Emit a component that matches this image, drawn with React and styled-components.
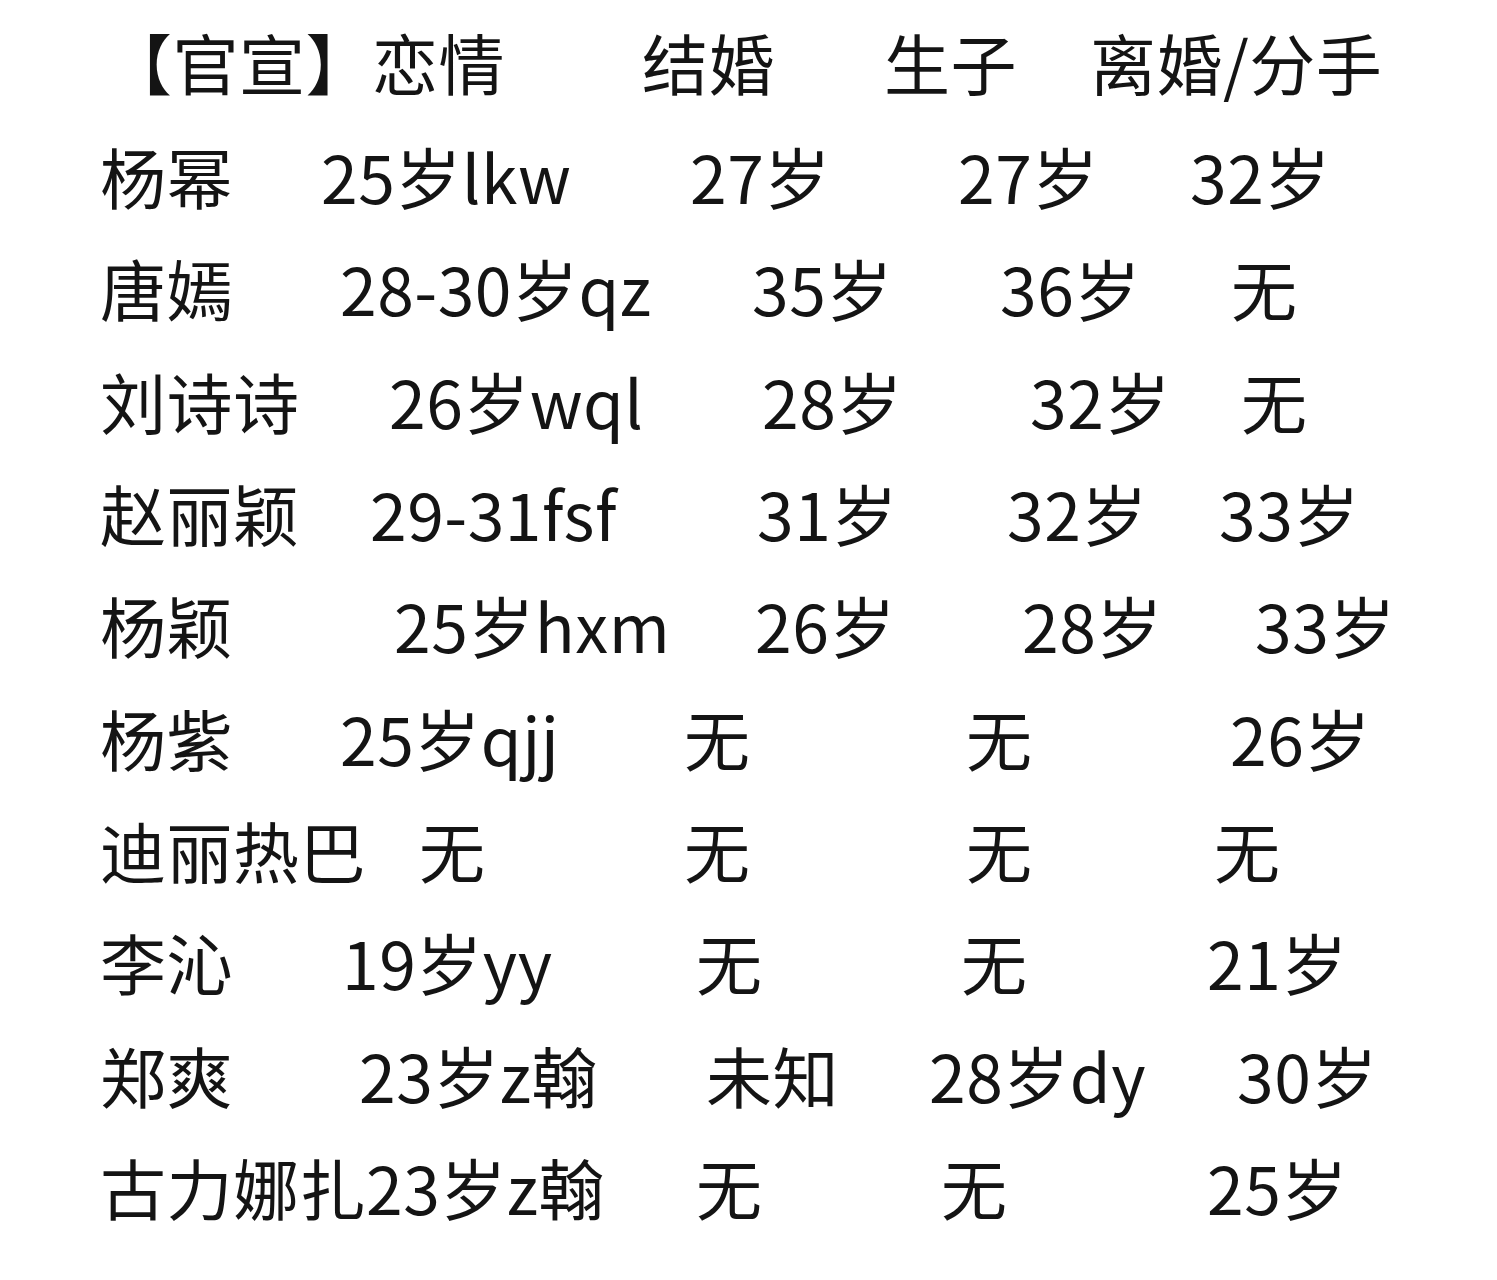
import React from "react";
import styled, { createGlobalStyle } from "styled-components";

const Global = createGlobalStyle`
  html, body { margin: 0; padding: 0; background: #ffffff; }
  body { font-family: "Noto Sans CJK SC", "Noto Sans", sans-serif; color: #141414; }
`;

const Sheet = styled.div`
  width: 1497px;
  min-height: 1280px;
  padding-top: 3px;
  box-sizing: border-box;
  background: #ffffff;
  overflow: hidden;
`;

const Row = styled.div`
  display: flex;
  align-items: center;
  height: ${(p) => p.$h}px;
  padding-left: ${(p) => p.$indent}px;
  font-size: 66px;
  line-height: 1;
  white-space: nowrap;
`;

const Cell = styled.span`
  flex: ${(p) => (p.$w ? `0 0 ${p.$w}px` : "0 0 auto")};
  letter-spacing: 0.5px;
`;

const header = { h: 116, cells: [[106, "【官宣】恋情"], [642, "结婚"], [884, "生子"], [1090, "离婚/分手"]] };

const rows = [
  [[100, "杨幂"], [321, "25岁lkw"], [690, "27岁"], [958, "27岁"], [1190, "32岁"]],
  [[100, "唐嫣"], [340, "28-30岁qz"], [752, "35岁"], [1000, "36岁"], [1231, "无"]],
  [[100, "刘诗诗"], [389, "26岁wql"], [762, "28岁"], [1030, "32岁"], [1241, "无"]],
  [[100, "赵丽颖"], [370, "29-31fsf"], [757, "31岁"], [1007, "32岁"], [1219, "33岁"]],
  [[100, "杨颖"], [394, "25岁hxm"], [755, "26岁"], [1022, "28岁"], [1255, "33岁"]],
  [[100, "杨紫"], [340, "25岁qjj"], [684, "无"], [966, "无"], [1230, "26岁"]],
  [[100, "迪丽热巴"], [419, "无"], [684, "无"], [966, "无"], [1214, "无"]],
  [[100, "李沁"], [342, "19岁yy"], [696, "无"], [961, "无"], [1207, "21岁"]],
  [[100, "郑爽"], [359, "23岁z翰"], [706, "未知"], [929, "28岁dy"], [1237, "30岁"]],
  [[100, "古力娜扎23岁z翰"], [696, "无"], [941, "无"], [1207, "25岁"]],
];

function Line({ cells, h }) {
  return (
    <Row $h={h} $indent={cells[0][0]}>
      {cells.map(([x, text], i) => (
        <Cell key={i} $w={i < cells.length - 1 ? cells[i + 1][0] - x : 0}>
          {text}
        </Cell>
      ))}
    </Row>
  );
}

export default function App() {
  return (
    <>
      <Global />
      <Sheet>
        <Line cells={header.cells} h={header.h} />
        {rows.map((r, i) => (
          <Line key={i} cells={r} h={112.3} />
        ))}
      </Sheet>
    </>
  );
}
